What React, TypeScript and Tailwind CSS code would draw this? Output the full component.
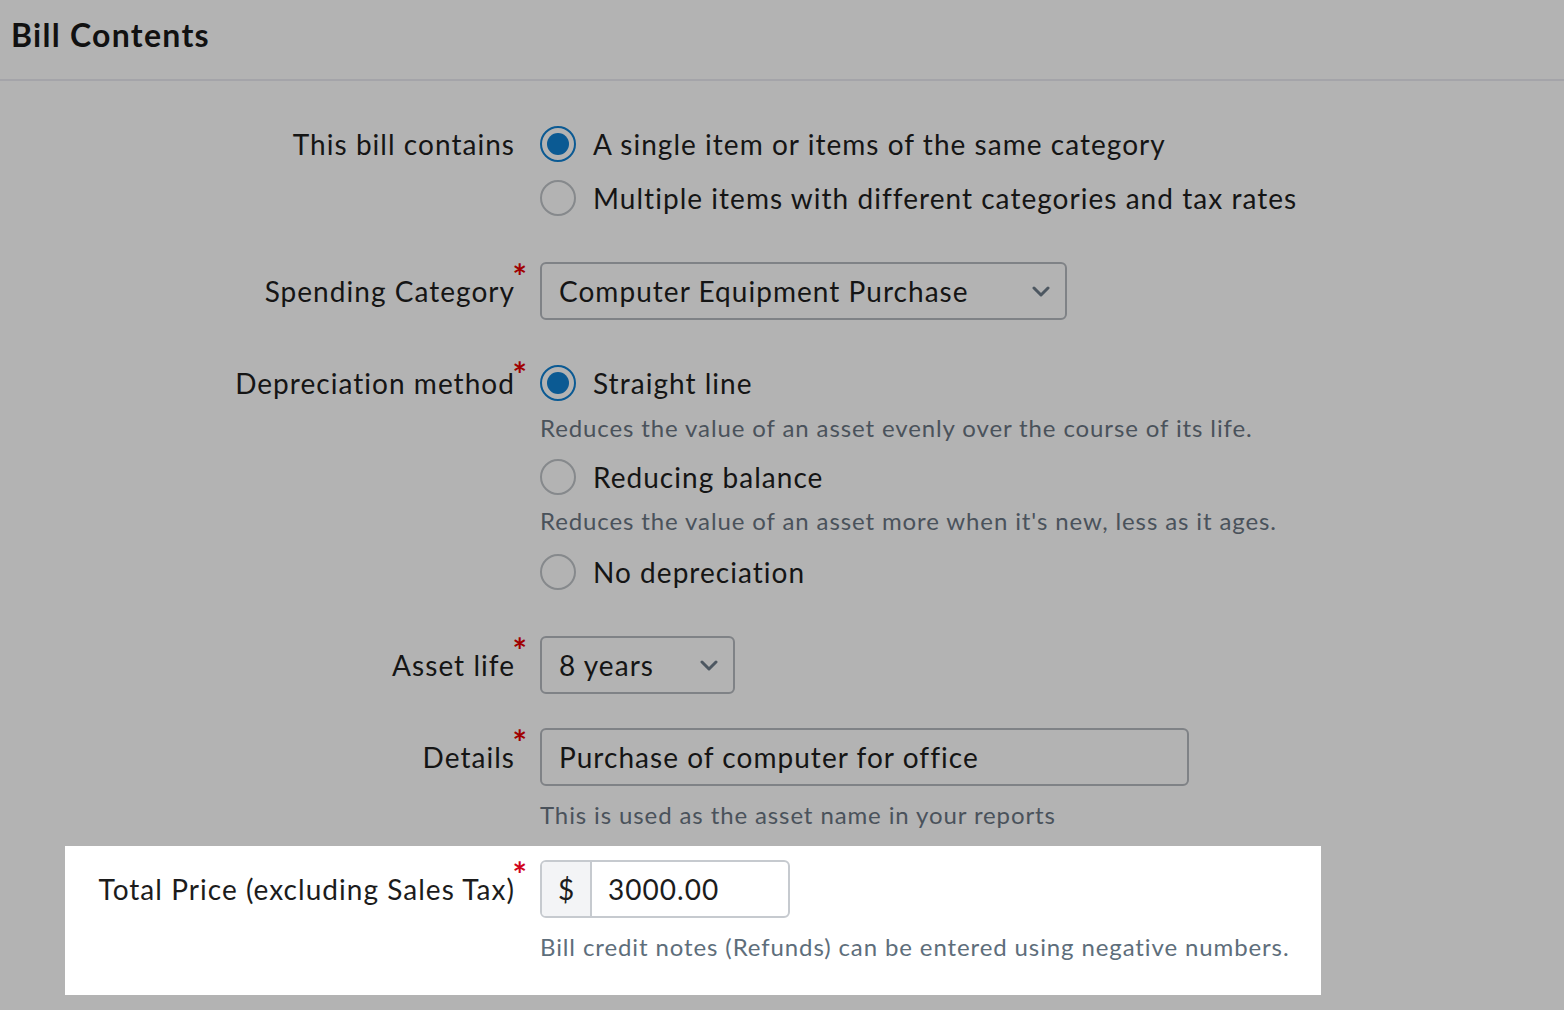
import React from "react";

const FONT = { fontFamily: "Lato, 'Noto Sans', sans-serif" };

function Radio({ checked }: { checked?: boolean }) {
  return checked ? (
    <span className="flex h-[36px] w-[36px] shrink-0 items-center justify-center rounded-full border-2 border-[#0b5a93]">
      <span className="h-[22px] w-[22px] rounded-full bg-[#0b5a93]" />
    </span>
  ) : (
    <span className="h-[36px] w-[36px] shrink-0 rounded-full border-2 border-[#86898c]" />
  );
}

function Option({ checked, label }: { checked?: boolean; label: string }) {
  return (
    <div className="flex h-[46px] items-center">
      <Radio checked={checked} />
      <span className="ml-[17px] text-[28px] tracking-[0.037em] text-[#151515]">{label}</span>
    </div>
  );
}

function Hint({ children, white }: { children: React.ReactNode; white?: boolean }) {
  return (
    <div
      className={
        "flex h-[32px] items-center text-[24px] tracking-[0.037em] " + (white ? "text-[#5e6e7b]" : "text-[#4a525b]")
      }
    >
      {children}
    </div>
  );
}

function Asterisk({ white }: { white?: boolean }) {
  return (
    <span
      className={
        "absolute right-[-12px] top-[-3px] text-[34px] font-bold leading-none " +
        (white ? "text-[#d0021b]" : "text-[#a00000]")
      }
    >
      *
    </span>
  );
}

function Label({
  text,
  req,
  h,
  white,
  w = "w-[515px]",
}: {
  text: string;
  req?: boolean;
  h: string;
  white?: boolean;
  w?: string;
}) {
  return (
    <div className={"relative flex shrink-0 items-center justify-end " + w + " " + h}>
      <span className={"text-[28px] tracking-[0.037em] " + (white ? "text-[#1c1c1c]" : "text-[#151515]")}>{text}</span>
      {req && <Asterisk white={white} />}
    </div>
  );
}

function Chevron() {
  return (
    <svg width="18" height="11" viewBox="0 0 18 11" fill="none">
      <path d="M2 2 L9 9 L16 2" stroke="#4d5761" strokeWidth="3" strokeLinecap="round" strokeLinejoin="round" />
    </svg>
  );
}

export default function App() {
  return (
    <div className="min-h-[1010px] w-full bg-[#b3b3b3]" style={FONT}>
      <div className="flex h-[81px] items-center border-b-2 border-[#a4a4a9] pb-[10px] pl-[11px]">
        <h1 className="text-[32px] font-bold tracking-[0.04em] text-[#111111]">Bill Contents</h1>
      </div>

      {/* This bill contains */}
      <div className="mt-[40px] flex">
        <Label text="This bill contains" h="h-[46px]" />
        <div className="ml-[25px] flex flex-col gap-[8px]">
          <Option checked label="A single item or items of the same category" />
          <Option label="Multiple items with different categories and tax rates" />
        </div>
      </div>

      {/* Spending category */}
      <div className="mt-[41px] flex">
        <Label text="Spending Category" req h="h-[58px]" />
        <div className="ml-[25px] flex h-[58px] w-[527px] items-center justify-between rounded-[6px] border-2 border-[#7f8286] pl-[17px] pr-[15px]">
          <span className="text-[28px] tracking-[0.037em] text-[#151515]">Computer Equipment Purchase</span>
          <Chevron />
        </div>
      </div>

      {/* Depreciation */}
      <div className="mt-[40px] flex">
        <Label text="Depreciation method" req h="h-[46px]" />
        <div className="ml-[25px] flex flex-col">
          <Option checked label="Straight line" />
          <div className="mt-[6px]">
            <Hint>Reduces the value of an asset evenly over the course of its life.</Hint>
          </div>
          <div className="mt-[10px]">
            <Option label="Reducing balance" />
          </div>
          <div className="mt-[5px]">
            <Hint>Reduces the value of an asset more when it's new, less as it ages.</Hint>
          </div>
          <div className="mt-[12px]">
            <Option label="No depreciation" />
          </div>
        </div>
      </div>

      {/* Asset life */}
      <div className="mt-[41px] flex">
        <Label text="Asset life" req h="h-[58px]" />
        <div className="ml-[25px] flex h-[58px] w-[195px] items-center justify-between rounded-[6px] border-2 border-[#7f8286] pl-[17px] pr-[15px]">
          <span className="text-[28px] tracking-[0.037em] text-[#151515]">8 years</span>
          <Chevron />
        </div>
      </div>

      {/* Details */}
      <div className="mt-[34px] flex">
        <Label text="Details" req h="h-[58px]" />
        <div className="ml-[25px] flex flex-col">
          <div className="flex h-[58px] w-[649px] items-center rounded-[6px] border-2 border-[#7f8286] pl-[17px]">
            <span className="text-[28px] tracking-[0.037em] text-[#151515]">Purchase of computer for office</span>
          </div>
          <div className="mt-[13px]">
            <Hint>This is used as the asset name in your reports</Hint>
          </div>
        </div>
      </div>

      {/* Highlighted total price */}
      <div className="ml-[65px] mt-[15px] w-[1256px] bg-white pb-[32px] pt-[14px]">
        <div className="flex">
          <Label text="Total Price (excluding Sales Tax)" req white h="h-[58px]" w="w-[450px]" />
          <div className="ml-[25px] flex flex-col">
            <div className="flex h-[58px] w-[250px] overflow-hidden rounded-[6px] border-2 border-[#c6cacf]">
              <div className="flex w-[50px] items-center justify-center border-r-2 border-[#c6cacf] bg-[#f3f4f6] text-[28px] text-[#1c1c1c]">
                $
              </div>
              <div className="flex flex-1 items-center pl-[16px] text-[28px] tracking-[0.037em] text-[#1c1c1c]">
                3000.00
              </div>
            </div>
            <div className="mt-[13px]">
              <Hint white>Bill credit notes (Refunds) can be entered using negative numbers.</Hint>
            </div>
          </div>
        </div>
      </div>
    </div>
  );
}
